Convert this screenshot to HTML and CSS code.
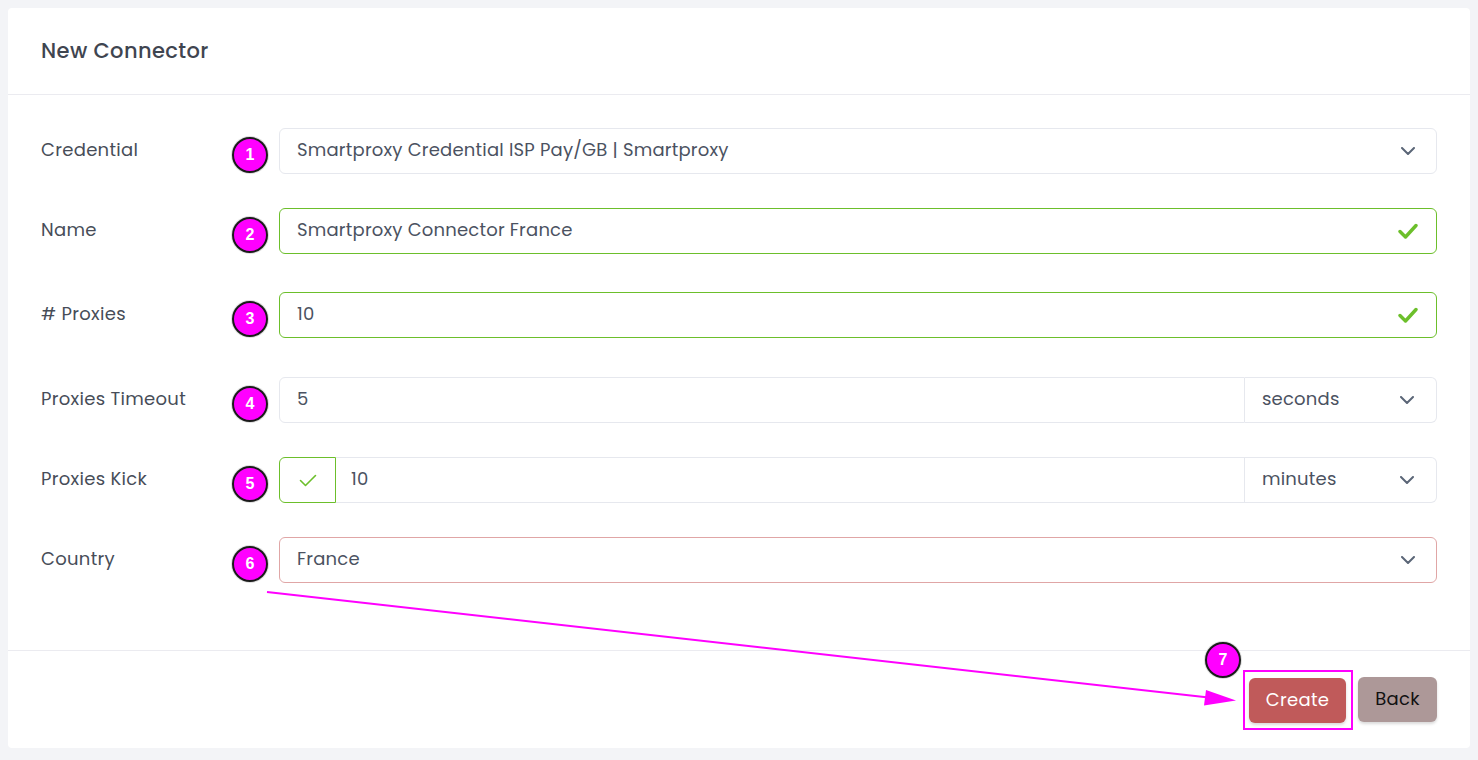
FILE: index.html
```html
<!DOCTYPE html>
<html>
<head>
<meta charset="utf-8">
<link rel="stylesheet" href="styles.css">
</head>
<body>
<div class="card">
  <div class="card-header"><h1 class="title">New Connector</h1></div>
  <div class="card-body">
    <div class="row">
      <label class="label">Credential</label>
      <span class="badge">1</span>
      <div class="control select">
        <span class="value">Smartproxy Credential ISP Pay/GB | Smartproxy</span>
        <svg class="chev" viewBox="0 0 14 8" width="14" height="8"><path d="M1 1l6 6 6-6" fill="none" stroke="#5b6677" stroke-width="2" stroke-linecap="round" stroke-linejoin="round"/></svg>
      </div>
    </div>
    <div class="row row-gap-38">
      <label class="label">Name</label>
      <span class="badge">2</span>
      <div class="control valid">
        <span class="value">Smartproxy Connector France</span>
        <svg class="tick" viewBox="0 0 20 16" width="20" height="16"><path d="M2 8.5l5.5 5.5L18 2.5" fill="none" stroke="#6cbf2b" stroke-width="3.4" stroke-linecap="round" stroke-linejoin="round"/></svg>
      </div>
    </div>
    <div class="row row-gap-39">
      <label class="label">#&nbsp;Proxies</label>
      <span class="badge">3</span>
      <div class="control valid">
        <span class="value">10</span>
        <svg class="tick" viewBox="0 0 20 16" width="20" height="16"><path d="M2 8.5l5.5 5.5L18 2.5" fill="none" stroke="#6cbf2b" stroke-width="3.4" stroke-linecap="round" stroke-linejoin="round"/></svg>
      </div>
    </div>
    <div class="row">
      <label class="label">Proxies Timeout</label>
      <span class="badge">4</span>
      <div class="group">
        <div class="g-input"><span class="value">5</span></div>
        <div class="g-select">
          <span class="value">seconds</span>
          <svg class="chev" viewBox="0 0 14 8" width="14" height="8"><path d="M1 1l6 6 6-6" fill="none" stroke="#5b6677" stroke-width="2" stroke-linecap="round" stroke-linejoin="round"/></svg>
        </div>
      </div>
    </div>
    <div class="row">
      <label class="label">Proxies Kick</label>
      <span class="badge">5</span>
      <div class="group">
        <div class="g-check">
          <svg viewBox="0 0 18 13" width="18" height="13"><path d="M1.5 6.5l5 5L16.5 1.5" fill="none" stroke="#6cbf2b" stroke-width="1.6" stroke-linecap="round" stroke-linejoin="round"/></svg>
        </div>
        <div class="g-input g-mid"><span class="value">10</span></div>
        <div class="g-select">
          <span class="value">minutes</span>
          <svg class="chev" viewBox="0 0 14 8" width="14" height="8"><path d="M1 1l6 6 6-6" fill="none" stroke="#5b6677" stroke-width="2" stroke-linecap="round" stroke-linejoin="round"/></svg>
        </div>
      </div>
    </div>
    <div class="row">
      <label class="label">Country</label>
      <span class="badge">6</span>
      <div class="control select invalid">
        <span class="value">France</span>
        <svg class="chev" viewBox="0 0 14 8" width="14" height="8"><path d="M1 1l6 6 6-6" fill="none" stroke="#5b6677" stroke-width="2" stroke-linecap="round" stroke-linejoin="round"/></svg>
      </div>
    </div>
  </div>
  <div class="card-footer">
    <div class="highlight">
      <span class="badge badge-7">7</span>
      <button class="btn btn-create">Create</button>
    </div>
    <button class="btn btn-back">Back</button>
  </div>
</div>
<svg class="arrow" width="1478" height="760" viewBox="0 0 1478 760">
  <line x1="267" y1="592" x2="1222" y2="699" stroke="#ff00ff" stroke-width="2"/>
  <path d="M1236 700.5 L1204 705.5 L1206 690 Z" fill="#ff00ff"/>
</svg>
</body>
</html>
```

FILE: styles.css
```css
html, body {
  margin: 0;
  padding: 0;
}
body {
  background: #f3f4f7;
  font-family: "Poppins", "Open Sans", "Noto Sans", sans-serif;
  color: #4b5563;
  padding: 8px;
  width: 1478px;
  height: 760px;
  box-sizing: border-box;
  position: relative;
  overflow: hidden;
}
.card {
  background: #fff;
  border-radius: 4px;
  height: 740px;
  display: flex;
  flex-direction: column;
}
.card-header {
  height: 86px;
  border-bottom: 1px solid #ebebf0;
  display: flex;
  align-items: center;
  padding: 0 33px;
}
.title {
  margin: 0;
  padding-bottom: 2px;
  font-size: 21px;
  font-weight: 500;
  color: #3f4550;
  letter-spacing: 0.4px;
}
.card-body {
  padding: 33px 33px 0 33px;
  flex: none;
  height: 522px;
}
.row {
  display: flex;
  align-items: center;
  height: 46px;
  margin-bottom: 34px;
}
.row-gap-38 { margin-bottom: 38px; }
.row-gap-39 { margin-bottom: 39px; }
.label {
  width: 191px;
  font-size: 18px;
  letter-spacing: 0.3px;
  color: #474d58;
  padding-bottom: 4px;
}
.badge {
  width: 32px;
  height: 32px;
  border-radius: 50%;
  background: #ff00ff;
  border: 2px solid #1a1a1a;
  color: #fff;
  font-family: "Liberation Sans", Arial, sans-serif;
  font-weight: bold;
  font-size: 16px;
  display: flex;
  align-items: center;
  justify-content: center;
  flex: none;
  margin-top: 8px;
  box-shadow: 0 0 0 1px #ddd;
}
.control {
  flex: 1;
  margin-left: 11px;
  height: 46px;
  box-sizing: border-box;
  border: 1px solid #e6e8ee;
  border-radius: 6px;
  display: flex;
  align-items: center;
  padding: 0 20px 0 17px;
}
.value {
  font-size: 18px;
  letter-spacing: 0.2px;
  color: #4b5261;
  flex: 1;
  padding-bottom: 4px;
}
.valid { border-color: #6cbf2b; }
.invalid { border-color: #e0a6a6; }
.chev { flex: none; margin-right: 1px; }
.tick { flex: none; margin-right: -2px; }
.group {
  flex: 1;
  margin-left: 11px;
  height: 46px;
  display: flex;
}
.g-input {
  flex: 1;
  border: 1px solid #e6e8ee;
  border-radius: 6px 0 0 6px;
  display: flex;
  align-items: center;
  padding: 0 17px;
}
.g-mid {
  border-radius: 0;
  border-left: none;
  padding-left: 15px;
}
.g-check {
  width: 57px;
  box-sizing: border-box;
  border: 1px solid #6cbf2b;
  border-radius: 6px 0 0 6px;
  display: flex;
  align-items: center;
  justify-content: center;
}
.g-select {
  width: 192px;
  box-sizing: border-box;
  border: 1px solid #e6e8ee;
  border-left: none;
  border-radius: 0 6px 6px 0;
  display: flex;
  align-items: center;
  padding: 0 21px 0 17px;
}
.card-footer {
  flex: 1;
  border-top: 1px solid #ebebf0;
  display: flex;
  justify-content: flex-end;
  align-items: center;
  padding: 0 33px 0 0;
  gap: 5px;
}
.highlight {
  position: relative;
  border: 2px solid #ff00ff;
  padding: 6px 5px 5px 4px;
  display: flex;
}
.badge-7 {
  position: absolute;
  left: -40px;
  top: -30px;
  margin: 0;
}
.btn {
  font-family: "Poppins", "Open Sans", "Noto Sans", sans-serif;
  font-size: 18px;
  letter-spacing: 0.3px;
  border: none;
  border-radius: 6px;
  height: 45px;
  padding-bottom: 3px;
  box-shadow: 0 2px 3px rgba(0,0,0,0.15);
}
.btn-create {
  background: #c05a5a;
  color: #fff;
  width: 97px;
}
.btn-back {
  background: #ad9898;
  color: #111;
  width: 79px;
}
.arrow {
  position: absolute;
  left: 0;
  top: 0;
  pointer-events: none;
}
```
